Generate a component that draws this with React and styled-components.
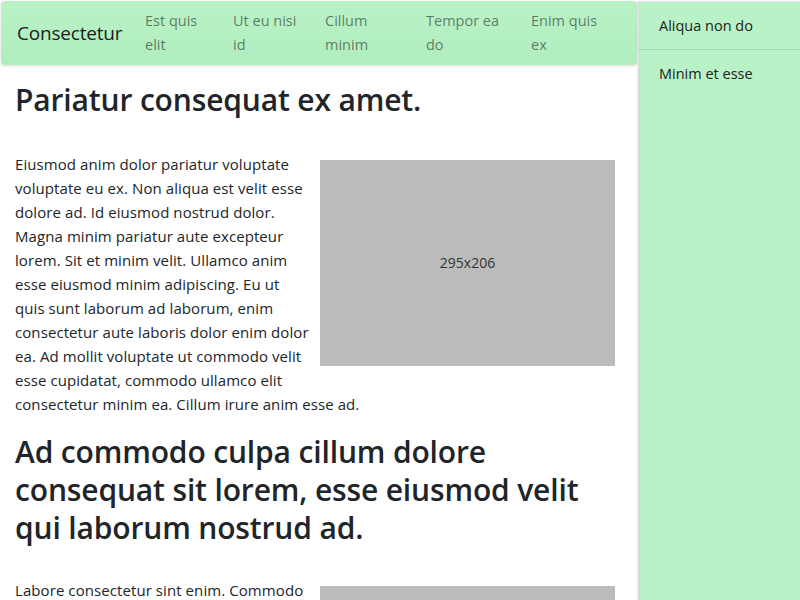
import React from "react";
import styled, { createGlobalStyle } from "styled-components";

const GlobalStyle = createGlobalStyle`
  body {
    margin: 0;
    font-family: "Open Sans", "Noto Sans", sans-serif;
    color: #212529;
    background: #fff;
  }
`;

const Page = styled.div`
  display: grid;
  grid-template-columns: 638px 162px;
  height: 600px;
  overflow: hidden;
`;

const Main = styled.main`
  display: flex;
  flex-direction: column;
`;

const NavBar = styled.nav`
  margin: 1px;
  height: 64px;
  display: flex;
  align-items: center;
  padding: 0 16px;
  border-radius: 4px;
  background: linear-gradient(#b9f1c6, #b0eebe);
  box-shadow: 0 1px 3px rgba(0, 0, 0, 0.15);
  box-sizing: border-box;
`;

const Brand = styled.a`
  font-size: 19px;
  color: #1b1e21;
  width: 131px;
  letter-spacing: -0.2px;
`;

const NavLink = styled.a`
  width: ${(p) => p.$w}px;
  flex: none;
  font-size: 14.5px;
  line-height: 24px;
  color: rgba(0, 0, 0, 0.5);
  padding-right: 20px;
  box-sizing: border-box;
`;

const Content = styled.div`
  padding: 0 23px 0 15px;
`;

const Section = styled.section`
  display: flow-root;
`;

const Heading = styled.h1`
  font-size: 30px;
  font-weight: 600;
  line-height: 38px;
  margin: ${(p) => p.$top}px 0 ${(p) => p.$bottom}px;
  letter-spacing: -0.15px;
`;

const Paragraph = styled.p`
  font-size: 15px;
  line-height: 24px;
  margin: 0;
  letter-spacing: 0.08px;
`;

const Placeholder = styled.div`
  float: right;
  width: 295px;
  height: 206px;
  margin: 8px 0 8px 10px;
  background: #bbbbbb;
  display: flex;
  align-items: center;
  justify-content: center;
  font-size: 14px;
  letter-spacing: 0;
  color: #333;
`;

const Sidebar = styled.aside`
  margin-top: 1px;
  background: #b8f2c6;
  border-left: 1px solid #d6dcd8;
  border-top: 1px solid #e6eae7;
  box-shadow: -1px 0 2px rgba(0, 0, 0, 0.08);
`;

const SideItem = styled.div`
  padding: 0 20px;
  height: 47px;
  display: flex;
  align-items: center;
  font-size: 14.5px;
  color: #222;
  border-bottom: ${(p) => (p.$last ? "none" : "1px solid #9fd6ac")};
`;

const links = [
  ["Est quis elit", 88],
  ["Ut eu nisi id", 92],
  ["Cillum minim", 101],
  ["Tempor ea do", 105],
  ["Enim quis ex", 90],
];

export default function App() {
  return (
    <>
      <GlobalStyle />
      <Page>
        <Main>
          <NavBar>
            <Brand>Consectetur</Brand>
            {links.map(([t, w]) => (
              <NavLink key={t} $w={w}>
                {t}
              </NavLink>
            ))}
          </NavBar>
          <Content>
            <Section>
              <Heading $top={15} $bottom={33}>
                Pariatur consequat ex amet.
              </Heading>
              <Paragraph>
                <Placeholder>295x206</Placeholder>
                Eiusmod anim dolor pariatur voluptate voluptate eu ex. Non aliqua est velit esse dolore ad. Id eiusmod
                nostrud dolor. Magna minim pariatur aute excepteur lorem. Sit et minim velit. Ullamco anim esse eiusmod
                minim adipiscing. Eu ut quis sunt laborum ad laborum, enim consectetur aute laboris dolor enim dolor ea.
                Ad mollit voluptate ut commodo velit esse cupidatat, commodo ullamco elit consectetur minim ea. Cillum
                irure anim esse ad.
              </Paragraph>
            </Section>
            <Section>
              <Heading $top={17} $bottom={31}>
                Ad commodo culpa cillum dolore consequat sit lorem, esse eiusmod velit qui laborum nostrud ad.
              </Heading>
              <Paragraph>
                <Placeholder>295x206</Placeholder>
                Labore consectetur sint enim. Commodo dolor est velit aliqua ullamco. Magna esse ad velit minim.
              </Paragraph>
            </Section>
          </Content>
        </Main>
        <Sidebar>
          <SideItem>Aliqua non do</SideItem>
          <SideItem $last>Minim et esse</SideItem>
        </Sidebar>
      </Page>
    </>
  );
}
